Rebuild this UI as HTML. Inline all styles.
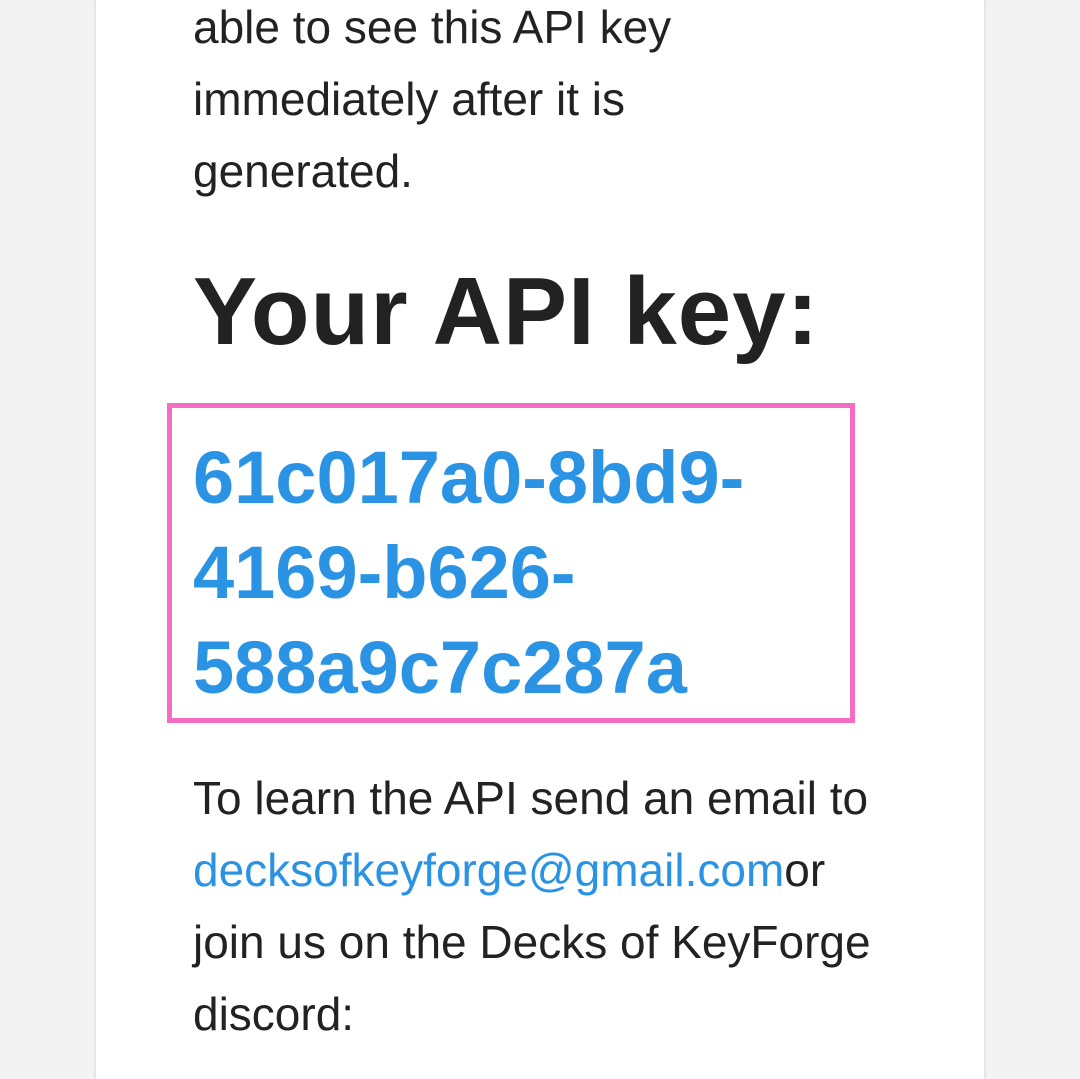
<!DOCTYPE html>
<html><head><style>
html,body{margin:0;padding:0;width:1080px;height:1079px;overflow:hidden;background:#f3f3f3;}
.card{position:absolute;left:96px;top:0;width:888px;height:1079px;background:#fff;box-shadow:0 0 4px rgba(0,0,0,.15);}
.t{position:absolute;left:193px;font-family:"Liberation Sans",sans-serif;color:#222;font-size:46px;white-space:nowrap;line-height:72px;}
.h{position:absolute;left:193px;top:262px;font-family:"Liberation Sans",sans-serif;font-weight:bold;font-size:96px;color:#222;line-height:100px;letter-spacing:1px;}
.box{position:absolute;left:167px;top:403px;width:678px;height:310px;border:5px solid #f56cc3;}
.k{position:absolute;left:193px;top:430px;font-family:"Liberation Sans",sans-serif;font-weight:bold;font-size:74px;color:#2a93e4;line-height:95px;white-space:nowrap;}
a{color:#2a93e4;text-decoration:none;}
</style></head><body>
<div class="card"></div>
<div class="t" style="top:-9px">able to see this API key<br>immediately after it is<br>generated.</div>
<div class="h">Your API key:</div>
<div class="box"></div>
<div class="k">61c017a0-8bd9-<br>4169-b626-<br>588a9c7c287a</div>
<div class="t" style="top:762px">To learn the API send an email to<br><a>decksofkeyforge@gmail.com</a>or<br>join us on the Decks of KeyForge<br>discord:</div>
</body></html>
